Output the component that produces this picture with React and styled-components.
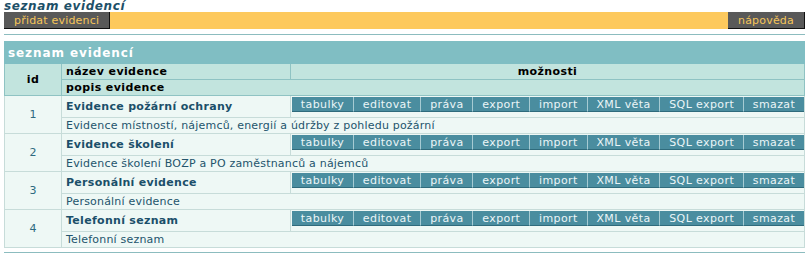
import React from "react"
import styled, { createGlobalStyle, css } from "styled-components"

const evidence = [
  { id: 1, name: "Evidence požární ochrany", desc: "Evidence místností, nájemců, energií a údržby z pohledu požární" },
  { id: 2, name: "Evidence školení", desc: "Evidence školení BOZP a PO zaměstnanců a nájemců" },
  { id: 3, name: "Personální evidence", desc: "Personální evidence" },
  { id: 4, name: "Telefonní seznam", desc: "Telefonní seznam" },
]

const actions = ["tabulky", "editovat", "práva", "export", "import", "XML věta", "SQL export", "smazat"]

const App = () => {
  return (
    <>
      <GlobalStyle />
      <Page>
        <Title>seznam evidencí</Title>
        <Toolbar>
          <ToolButton>přidat evidenci</ToolButton>
          <ToolButton>nápověda</ToolButton>
        </Toolbar>
        <Rule />
        <Table>
          <colgroup>
            <Col width={57} />
            <Col width={229} />
            <col />
          </colgroup>
          <thead>
            <tr>
              <Caption colSpan={3}>seznam evidencí</Caption>
            </tr>
            <tr>
              <HeadCell rowSpan={2} center>id</HeadCell>
              <HeadCell>název evidence</HeadCell>
              <HeadCell center>možnosti</HeadCell>
            </tr>
            <tr>
              <HeadCell colSpan={2}>popis evidence</HeadCell>
            </tr>
          </thead>
          {evidence.map(({ id, name, desc }) => (
            <tbody key={id}>
              <tr>
                <IdCell rowSpan={2}>{id}</IdCell>
                <NameCell>{name}</NameCell>
                <OptionsCell>
                  <ActionBar>
                    {actions.map((a) => (
                      <ActionButton key={a}>{a}</ActionButton>
                    ))}
                  </ActionBar>
                </OptionsCell>
              </tr>
              <tr>
                <DescCell colSpan={2}>{desc}</DescCell>
              </tr>
            </tbody>
          ))}
        </Table>
        <Rule bottom />
      </Page>
    </>
  )
}

export default App

const GlobalStyle = createGlobalStyle`
  body {
    margin: 0;
    background: #ffffff;
    font-family: "DejaVu Sans", Verdana, sans-serif;
    font-size: 11px;
  }
`

const Page = styled.div`
  width: 801px;
  padding: 0 4px;
`

const Title = styled.h1`
  margin: 0;
  height: 12px;
  font-size: 12px;
  line-height: 12px;
  font-weight: bold;
  font-style: italic;
  color: #1d5068;
  letter-spacing: 0.6px;
`

const Toolbar = styled.div`
  display: flex;
  justify-content: space-between;
  align-items: stretch;
  height: 17px;
  background: #fdc95d;
`

const ToolButton = styled.div`
  display: flex;
  align-items: center;
  padding: 0 10px 0 10px;
  background: #595959;
  color: #f5c55a;
  font-size: 11px;
  letter-spacing: 0.2px;
  border-right: 1px solid #111;
  border-bottom: 1px solid #111;
  box-sizing: border-box;
`

const Rule = styled.div`
  height: 1px;
  background: #8cbcbf;
  margin: 5px 0 6px;
  ${({ bottom }) =>
    bottom &&
    css`
      margin: 4px 0 0;
    `};
`

const Table = styled.table`
  width: 801px;
  border-collapse: collapse;
  table-layout: fixed;
`

const Col = styled.col`
  width: ${({ width }) => width}px;
`

const Caption = styled.th`
  height: 21px;
  padding: 0 0 0 3px;
  background: #80bec3;
  color: #ffffff;
  font-size: 12px;
  font-weight: bold;
  text-align: left;
  letter-spacing: 0.9px;
  border: 1px solid #80bec3;
`

const HeadCell = styled.th`
  height: 15px;
  padding: 0 4px;
  background: #c2e4de;
  color: #000;
  font-size: 11px;
  font-weight: bold;
  text-align: ${({ center }) => (center ? "center" : "left")};
  letter-spacing: 0.4px;
  border: 1px solid #8fc3c3;
`

const BodyCell = styled.td`
  background: #eef8f5;
  border: 1px solid #c7dcd9;
  color: #1f4f66;
`

const IdCell = styled(BodyCell)`
  text-align: center;
  color: #2d6a80;
  font-size: 11px;
`

const NameCell = styled(BodyCell)`
  height: 21px;
  padding: 0 4px;
  font-weight: bold;
  color: #1b4f6a;
  letter-spacing: 0.3px;
`

const OptionsCell = styled(BodyCell)`
  padding: 1px 0 5px 1px;
  vertical-align: top;
`

const DescCell = styled(BodyCell)`
  height: 15px;
  padding: 0 4px;
  color: #23546c;
  letter-spacing: 0.2px;
`

const ActionBar = styled.div`
  display: flex;
  height: 15px;
`

const ActionButton = styled.div`
  flex: 1 1 auto;
  display: flex;
  align-items: center;
  justify-content: center;
  background: #4a8d9f;
  color: #eaf5f7;
  font-size: 11px;
  letter-spacing: 0.4px;
  border-bottom: 1px solid #2f6b7c;
  white-space: nowrap;
  & + & {
    border-left: 1px solid #a6cbd3;
  }
`
